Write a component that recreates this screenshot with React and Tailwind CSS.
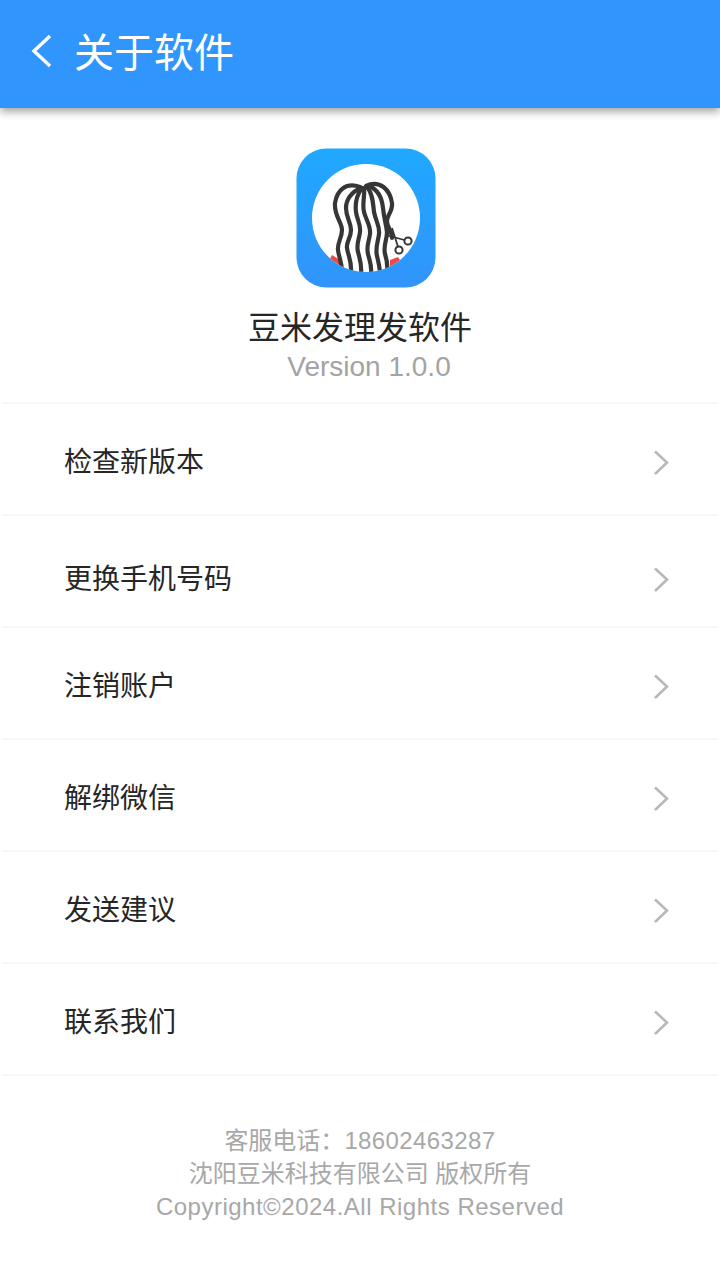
import React from 'react';

const rows = [
  { label: '检查新版本', pull: 'pt-[7px]', nudge: 'mt-[8px]' },
  { label: '更换手机号码', pull: 'pt-[18px]', nudge: 'mt-[18px]' },
  { label: '注销账户', pull: 'pt-[7px]', nudge: 'mt-[8px]' },
  { label: '解绑微信', pull: 'pt-[7px]', nudge: 'mt-[8px]' },
  { label: '发送建议', pull: 'pt-[7px]', nudge: 'mt-[8px]' },
  { label: '联系我们', pull: 'pt-[7px]', nudge: 'mt-[8px]' },
];

function Chevron({ className }) {
  return (
    <svg width="20" height="28" viewBox="0 0 20 28" fill="none" className={className}>
      <path d="M3 2.5 L15 13.5 L3 25" stroke="#b8b8b8" strokeWidth="2.6" />
    </svg>
  );
}

function Logo() {
  return (
    <svg width="140" height="140" viewBox="0 0 140 140">
      <defs>
        <linearGradient id="logoBg" x1="0" y1="0" x2="0" y2="1">
          <stop offset="0" stopColor="#20a8ff" />
          <stop offset="1" stopColor="#3194fb" />
        </linearGradient>
        <clipPath id="logoCircle">
          <circle cx="70" cy="70" r="54" />
        </clipPath>
      </defs>
      <rect x="0.5" y="0.5" width="139" height="139" rx="30" fill="url(#logoBg)" />
      <circle cx="70" cy="70" r="54" fill="#fff" />
      <g clipPath="url(#logoCircle)">
        <path d="M30 118 L36 107 L44 112 L44 130 Z" fill="#ee4a45" />
        <path d="M108 118 L102 109 L94 112 L94 130 Z" fill="#ee4a45" />
        <g fill="none" stroke="#363636" strokeWidth="4.2" strokeLinecap="round">
          <path d="M64 39 C50 34 41 42 39 55 C38 68 46 74 46 82 C46 90 41 95 42 102 C43 110 46 114 46 124" />
          <path d="M65 40 C55 44 50 52 50 60 C50 70 55 74 55 82 C55 90 50 94 51 100 C52 108 56 112 55 126" />
          <path d="M66 40 C60 48 59 56 60 64 C61 72 65 76 64 84 C63 92 60 96 62 104 C64 112 66 116 65 126" />
          <path d="M68 40 C69 48 66 56 68 64 C70 72 75 78 74 86 C73 94 70 98 72 106 C74 114 76 118 75 126" />
          <path d="M71 39 C77 46 77 56 78 64 C80 74 84 78 83 86 C82 94 79 100 81 108 C83 116 84 120 84 126" />
          <path d="M73 38 C83 42 86 50 87 60 C88 70 90 76 91 84 C91 92 87 98 89 106 C91 112 92 116 91 124" />
          <path d="M70 38 C84 31 94 42 96 55 C97 64 90 68 91 74 C92 80 96 84 96 90" />
        </g>
      </g>
      {/* scissors sit over the circle edge */}
      <g fill="none" stroke="#363636">
        <path d="M96 80 L103 102 M90 87 L112 93" strokeWidth="1.8" />
        <circle cx="112" cy="93" r="3.6" strokeWidth="2" fill="#fff" />
        <circle cx="103" cy="102" r="3.6" strokeWidth="2" fill="#fff" />
      </g>
    </svg>
  );
}

export default function App() {
  return (
    <div className="w-[720px] h-[1280px] bg-white overflow-hidden font-['Liberation_Sans','Noto_Sans_CJK_SC',sans-serif]">
      <header className="relative h-[108px] bg-[#3096fe] flex items-center pl-[30px] pb-[2px] shadow-[0_4px_8px_rgba(0,0,0,0.35)]">
        <svg width="24" height="36" viewBox="0 0 24 36" fill="none" className="mb-[4px]">
          <path d="M20 3 L4 18 L20 33" stroke="#fff" strokeWidth="3.4" />
        </svg>
        <h1 className="ml-[20px] text-[40px] leading-none text-white font-normal">关于软件</h1>
      </header>

      <section className="flex flex-col items-center pt-[40px] h-[294px]">
        <div className="ml-[12px] h-[140px]">
          <Logo />
        </div>
        <p className="mt-[17px] text-[32px] leading-[46px] text-[#262626]">豆米发理发软件</p>
        <p className="ml-[18px] text-[28px] leading-[32px] text-[#a3a3a3]">Version 1.0.0</p>
      </section>

      <ul className="mx-[2px] border-t-2 border-[#f7f7f7]">
        {rows.map((row) => (
          <li key={row.label} className="h-[112px] border-b-2 border-[#f7f7f7] flex items-center justify-between pl-[62px] pr-[46px]">
            <span className={`text-[28px] leading-[40px] text-[#262626] ${row.pull}`}>{row.label}</span>
            <Chevron className={row.nudge} />
          </li>
        ))}
      </ul>

      <footer className="pt-[48px] flex flex-col items-center text-[24px] leading-[33px] text-[#a8a8a8]">
        <p>客服电话：<span className="tracking-[0.4px]">18602463287</span></p>
        <p>沈阳豆米科技有限公司 版权所有</p>
        <p className="tracking-[0.5px]">Copyright©2024.All Rights Reserved</p>
      </footer>
    </div>
  );
}
